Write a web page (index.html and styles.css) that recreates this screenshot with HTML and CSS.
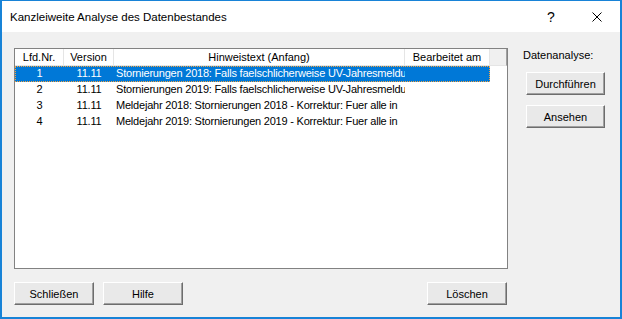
FILE: index.html
```html
<!DOCTYPE html>
<html lang="de">
<head>
  <meta charset="UTF-8">
  <title>Kanzleiweite Analyse des Datenbestandes</title>
  <link rel="stylesheet" href="styles.css">
</head>
<body>
<div class="window">
  <div class="titlebar">
    <span class="title">Kanzleiweite Analyse des Datenbestandes</span>
    <span class="help">?</span>
    <span class="close">
      <svg width="10" height="10" viewBox="0 0 10 10"><path d="M0.5 0.5 L9.5 9.5 M9.5 0.5 L0.5 9.5" stroke="#000" stroke-width="1"/></svg>
    </span>
  </div>

  <div class="content">
    <div class="left">
      <div class="listbox">
        <div class="row head">
          <div class="cell c">Lfd.Nr.</div>
          <div class="cell c">Version</div>
          <div class="cell c">Hinweistext (Anfang)</div>
          <div class="cell c">Bearbeitet am</div>
          <div class="cell filler"></div>
        </div>
        <div class="row selected">
          <div class="cell c">1</div>
          <div class="cell c">11.11</div>
          <div class="cell">Stornierungen 2018: Falls faelschlicherweise UV-Jahresmeldu</div>
          <div class="cell"></div>
        </div>
        <div class="row">
          <div class="cell c">2</div>
          <div class="cell c">11.11</div>
          <div class="cell">Stornierungen 2019: Falls faelschlicherweise UV-Jahresmeldu</div>
          <div class="cell"></div>
        </div>
        <div class="row">
          <div class="cell c">3</div>
          <div class="cell c">11.11</div>
          <div class="cell">Meldejahr 2018: Stornierungen 2018 - Korrektur: Fuer alle in</div>
          <div class="cell"></div>
        </div>
        <div class="row">
          <div class="cell c">4</div>
          <div class="cell c">11.11</div>
          <div class="cell">Meldejahr 2019: Stornierungen 2019 - Korrektur: Fuer alle in</div>
          <div class="cell"></div>
        </div>
      </div>

      <div class="footer">
        <button class="btn">Schließen</button>
        <button class="btn">Hilfe</button>
        <button class="btn push">Löschen</button>
      </div>
    </div>

    <div class="side">
      <div class="side-label">Datenanalyse:</div>
      <button class="btn">Durchführen</button>
      <button class="btn">Ansehen</button>
    </div>
  </div>
</div>
</body>
</html>
```

FILE: styles.css
```css
* { box-sizing: border-box; }
body {
  margin: 0;
  padding: 0;
  background-color: #f0f0f0;
  font-family: 'Liberation Sans', Arial, sans-serif;
  font-size: 11px;
  color: #000;
}
.window {
  width: 622px;
  height: 319px;
  border: 1px solid #1883d7;
  border-width: 1px 2px 2px 2px;
  background-color: #f0f0f0;
  display: flex;
  flex-direction: column;
}
.titlebar {
  height: 31px;
  background-color: #fff;
  display: flex;
  align-items: center;
  padding-left: 8px;
  font-size: 11.5px;
}
.title {
  flex: 1;
}
.help {
  font-size: 14px;
  width: 46px;
  text-align: center;
}
.close {
  width: 46px;
  display: flex;
  justify-content: center;
  align-items: center;
}
.content {
  flex: 1;
  display: flex;
  padding: 16px 13px 12px 12px;
}
.left {
  display: flex;
  flex-direction: column;
  width: 494px;
}
.listbox {
  height: 221px;
  background-color: #fff;
  border: 1px solid #828282;
  overflow: hidden;
}
.row {
  display: grid;
  grid-template-columns: 49px 50px 291px 85px 17px;
  height: 16px;
  line-height: 14px;
  white-space: nowrap;
  letter-spacing: -0.21px;
}
.cell {
  overflow: hidden;
  padding: 0 2px;
}
.c { text-align: center; }
.head {
  height: 17px;
  line-height: 16px;
  letter-spacing: 0;
}
.head .cell {
  border-right: 1px solid #e5e5e5;
  border-bottom: 1px solid #e5e5e5;
}
.head .filler {
  background-color: #f0f0f0;
  border-right: 1px solid #a0a0a0;
}
.selected {
  grid-template-columns: 49px 50px 291px 85px;
  width: 475px;
  background-color: #0078d7;
  color: #fff;
  outline: 1px dotted #f7a540;
  outline-offset: -1px;
}
.side {
  margin-left: 15px;
  display: flex;
  flex-direction: column;
  align-items: flex-start;
}
.side-label {
  margin-top: 1px;
  margin-bottom: 11px;
}
.btn {
  font-family: 'Liberation Sans', Arial, sans-serif;
  font-size: 11px;
  width: 79px;
  height: 23px;
  background-color: #e9e9e9;
  border: 1px solid;
  border-color: #fff #6d6d6d #6d6d6d #fff;
  box-shadow: inset -1px -1px 0 #a0a0a0;
  padding: 0;
  margin-bottom: 10px;
  margin-left: 3px;
  color: #000;
}
.footer {
  display: flex;
  margin-top: 13px;
  gap: 9px;
}
.footer .btn {
  width: 80px;
  margin: 0;
}
.footer .push {
  margin-left: auto;
  margin-right: 1px;
}
```
